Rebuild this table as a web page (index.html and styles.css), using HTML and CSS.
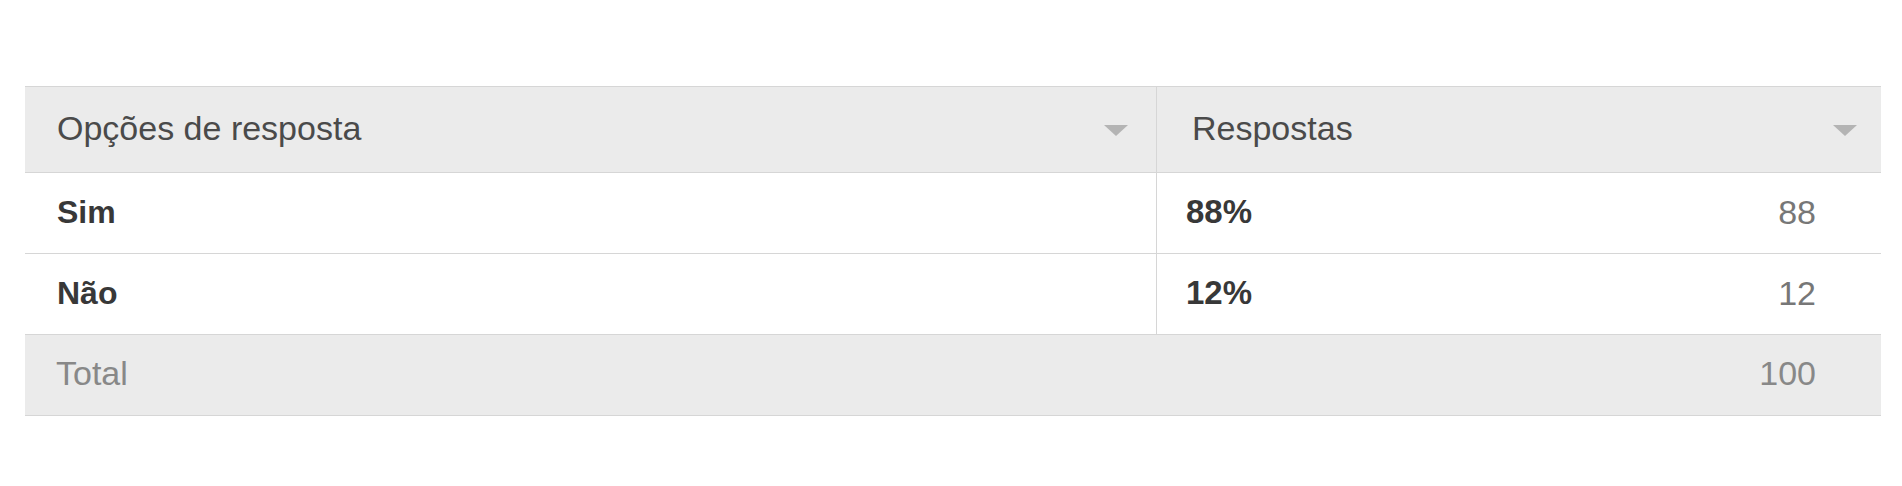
FILE: index.html
```html
<!DOCTYPE html>
<html lang="pt">
<head>
<meta charset="utf-8">
<title>Respostas</title>
<link rel="stylesheet" href="styles.css">
</head>
<body>
<div class="page">
  <div class="table">
    <div class="row head">
      <div class="cell c1"><span class="htext">Opções de resposta</span><span class="arrow"></span></div>
      <div class="cell c2"><span class="htext">Respostas</span><span class="arrow"></span></div>
    </div>
    <div class="row">
      <div class="cell c1"><span class="label">Sim</span></div>
      <div class="cell c2"><span class="pct">88%</span><span class="count">88</span></div>
    </div>
    <div class="row">
      <div class="cell c1"><span class="label">Não</span></div>
      <div class="cell c2"><span class="pct">12%</span><span class="count">12</span></div>
    </div>
    <div class="row total">
      <div class="cell tcell"><span class="ttext">Total</span><span class="count">100</span></div>
    </div>
  </div>
</div>
</body>
</html>
```

FILE: styles.css
```css
html, body {
  margin: 0;
  padding: 0;
  background: #ffffff;
}
.page {
  padding: 86px 21px 0 25px;
  font-family: "Liberation Sans", Arial, sans-serif;
}
.table {
  width: 1856px;
  border-top: 1px solid #d6d6d6;
}
.row {
  display: grid;
  grid-template-columns: 1132px 1fr;
  height: 80px;
  border-bottom: 1px solid #d6d6d6;
}
.row.head {
  height: 85px;
  background: #ebebeb;
}
.row.total {
  grid-template-columns: 1fr;
  background: #ebebeb;
}
.cell {
  display: flex;
  align-items: center;
  justify-content: space-between;
  padding-bottom: 2px;
}
.c1 {
  padding: 0 28px 2px 32px;
  border-right: 1px solid #d6d6d6;
}
.row .c2 {
  padding: 0 65px 2px 29px;
}
.row.head .c2 {
  padding: 0 24px 2px 35px;
}
.row.head .cell {
  padding-bottom: 3px;
}
.htext {
  font-size: 34px;
  color: #4a4a4a;
}
.arrow {
  width: 0;
  height: 0;
  border-left: 12px solid transparent;
  border-right: 12px solid transparent;
  border-top: 11px solid #b4b4b4;
  margin-top: 5px;
}
.label, .pct {
  font-size: 32px;
  font-weight: bold;
  color: #383838;
}
.pct {
  font-size: 33px;
}
.count {
  font-size: 34px;
  color: #777777;
}
.tcell {
  padding: 0 65px 4px 31px;
}
.ttext {
  font-size: 34px;
  color: #888888;
}
.total .count {
  font-size: 34px;
  color: #888888;
}
```
